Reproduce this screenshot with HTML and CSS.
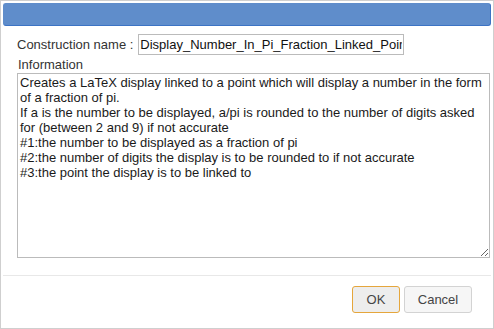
FILE: index.html
```html
<!DOCTYPE html>
<html lang="en">
<head>
    <meta charset="UTF-8">
    <title>Construction</title>
    <link rel="stylesheet" href="styles.css">
</head>
<body>
    <div class="dialog">
        <div class="titlebar"></div>
        <div class="content">
            <div class="row">
                <label class="label" for="name">Construction name :</label>
                <input type="text" id="name" class="name" value="Display_Number_In_Pi_Fraction_Linked_Point">
            </div>
            <div class="label info-label">Information</div>
            <textarea class="info">Creates a LaTeX display linked to a point which will display a number in the form of a fraction of pi.
If a is the number to be displayed, a/pi is rounded to the number of digits asked for (between 2 and 9) if not accurate
#1:the number to be displayed as a fraction of pi
#2:the number of digits the display is to be rounded to if not accurate
#3:the point the display is to be linked to</textarea>
        </div>
        <div class="buttons">
            <button class="btn ok">OK</button>
            <button class="btn cancel">Cancel</button>
        </div>
    </div>
</body>
</html>
```

FILE: styles.css
```css
html, body {
    margin: 0;
    height: 100%;
}
body {
    font-family: "Liberation Sans", Arial, sans-serif;
    font-size: 13px;
    color: #333;
    background: #fff;
}
.dialog {
    box-sizing: border-box;
    height: 329px;
    width: 494px;
    border: 1px solid #cfcfcf;
    padding: 2px 2px 0 2px;
    display: flex;
    flex-direction: column;
}
.titlebar {
    height: 21px;
    background: #5f8dcb;
    border: 1px solid #5f8dcb;
    border-right-color: #3c73c4;
    border-bottom-color: #3c73c4;
    border-radius: 3px;
    flex-shrink: 0;
}
.content {
    padding: 8px 3px 0 14px;
    display: flex;
    flex-direction: column;
}
.row {
    display: flex;
    align-items: center;
}
.label {
    color: #333;
    line-height: 15px;
}
.name {
    box-sizing: border-box;
    margin-left: 5px;
    width: 266px;
    height: 21px;
    padding: 1px 1px;
    border: 1px solid #bbb;
    font-family: inherit;
    font-size: 13px;
    color: #111;
    outline: none;
}
.info-label {
    margin-top: 2px;
    margin-left: 1px;
}
.info {
    box-sizing: border-box;
    margin: 1px 0 0 0;
    width: 473px;
    height: 185px;
    padding: 1px 2px;
    border: 1px solid #bbb;
    font-family: inherit;
    font-size: 13px;
    line-height: 15px;
    color: #1a1a1a;
    resize: vertical;
    outline: none;
}
.buttons {
    margin-top: 17px;
    border-top: 1px solid #e8e8e8;
    padding: 10px 19px 0 0;
    display: flex;
    justify-content: flex-end;
    gap: 4px;
}
.btn {
    box-sizing: border-box;
    height: 27px;
    padding: 0;
    font-family: inherit;
    font-size: 13px;
    color: #454545;
    background: #f6f6f6;
    border: 1px solid #d3d3d3;
    border-radius: 3px;
}
.btn.ok {
    width: 48px;
    background: #ededed;
    border-color: #e5a63c;
}
.btn.cancel {
    width: 68px;
}
```
